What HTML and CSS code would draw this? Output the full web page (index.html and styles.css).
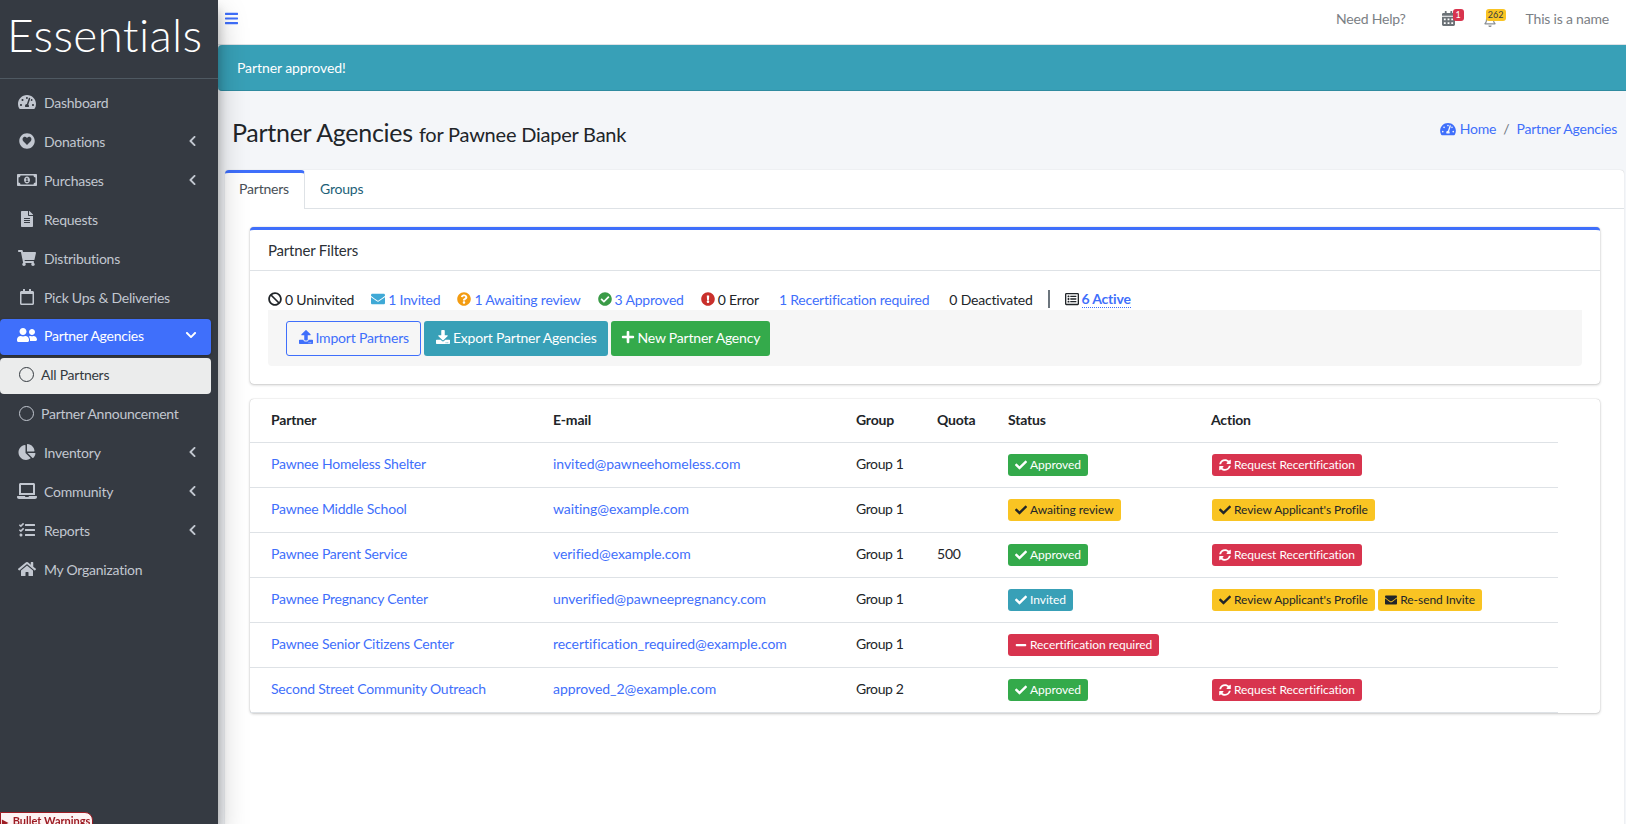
FILE: index.html
```html
<!DOCTYPE html>
<html lang="en">

<head>
    <meta charset="UTF-8" />
    <meta name="viewport" content="width=device-width, initial-scale=1.0" />
    <title>Partner Agencies</title>
    <link rel="stylesheet" href="styles.css">
</head>

<body>
    <!-- icon sprite -->
    <svg class="sprite" xmlns="http://www.w3.org/2000/svg">
        <symbol id="i-gauge" viewBox="0 0 576 512"><path d="M288 32C128.94 32 0 160.94 0 320c0 52.8 14.25 102.26 39.06 144.8 5.61 9.62 16.3 15.2 27.44 15.2h443c11.14 0 21.83-5.58 27.44-15.2C561.75 422.26 576 372.8 576 320c0-159.06-128.94-288-288-288zm0 64c14.71 0 26.58 10.13 30.32 23.65-1.11 2.26-2.64 4.23-3.45 6.67l-9.22 27.67c-5.13 3.49-10.97 6.01-17.64 6.01-17.67 0-32-14.33-32-32S270.33 96 288 96zM96 384c-17.67 0-32-14.33-32-32s14.33-32 32-32 32 14.33 32 32-14.33 32-32 32zm48-160c-17.67 0-32-14.33-32-32s14.33-32 32-32 32 14.33 32 32-14.33 32-32 32zm246.77-72.41l-61.33 184C343.13 347.33 352 364.54 352 384c0 11.72-3.38 22.55-8.88 32H232.88c-5.5-9.45-8.88-20.28-8.88-32 0-33.94 26.5-61.43 59.9-63.59l61.34-184.01c4.17-12.56 17.73-19.45 30.36-15.17 12.57 4.19 19.35 17.79 15.17 30.36zm14.66 57.2l15.52-46.55c3.47-1.29 7.13-2.23 11.05-2.23 17.67 0 32 14.33 32 32s-14.33 32-32 32c-11.38-.01-20.89-6.28-26.57-15.22zM480 384c-17.67 0-32-14.33-32-32s14.33-32 32-32 32 14.33 32 32-14.33 32-32 32z"/></symbol>
        <symbol id="i-heart" viewBox="0 0 512 512"><path fill-rule="evenodd" d="M256 8C119 8 8 119 8 256s111 248 248 248 248-111 248-248S393 8 256 8zm0 376L138 262c-34-35-32-93 6-123 33-26 79-18 104 9l8 9 8-9c25-27 71-35 104-9 38 30 40 88 6 123L256 384z"/></symbol>
        <symbol id="i-money" viewBox="0 0 640 512"><path d="M320 144c-53.02 0-96 50.14-96 112 0 61.85 42.98 112 96 112 53 0 96-50.13 96-112 0-61.86-42.98-112-96-112zm40 168c0 4.42-3.58 8-8 8h-64c-4.42 0-8-3.58-8-8v-16c0-4.42 3.58-8 8-8h16v-55.44l-.47.31a7.992 7.992 0 0 1-11.09-2.22l-8.88-13.31a7.992 7.992 0 0 1 2.22-11.09l15.33-10.22a23.99 23.99 0 0 1 13.31-4.03H328c4.42 0 8 3.58 8 8v88h16c4.42 0 8 3.58 8 8v16zM608 64H32C14.33 64 0 78.33 0 96v320c0 17.67 14.33 32 32 32h576c17.67 0 32-14.33 32-32V96c0-17.67-14.33-32-32-32zm-16 272c-35.35 0-64 28.65-64 64H112c0-35.35-28.65-64-64-64V176c35.35 0 64-28.65 64-64h416c0 35.35 28.65 64 64 64v160z"/></symbol>
        <symbol id="i-file" viewBox="0 0 384 512"><path d="M224 136V0H24C10.7 0 0 10.7 0 24v464c0 13.3 10.7 24 24 24h336c13.3 0 24-10.7 24-24V160H248c-13.2 0-24-10.8-24-24zm64 236c0 6.6-5.4 12-12 12H108c-6.6 0-12-5.4-12-12v-8c0-6.6 5.4-12 12-12h168c6.6 0 12 5.4 12 12v8zm0-64c0 6.6-5.4 12-12 12H108c-6.6 0-12-5.4-12-12v-8c0-6.6 5.4-12 12-12h168c6.6 0 12 5.4 12 12v8zm0-72v8c0 6.6-5.4 12-12 12H108c-6.6 0-12-5.4-12-12v-8c0-6.6 5.4-12 12-12h168c6.6 0 12 5.4 12 12zm96-114.1v6.1H256V0h6.1c6.4 0 12.5 2.5 17 7l97.9 98c4.5 4.5 7 10.6 7 16.9z"/></symbol>
        <symbol id="i-cart" viewBox="0 0 576 512"><path d="M528.12 301.319l47.273-208C578.806 78.301 567.391 64 551.99 64H159.208l-9.166-44.81C147.758 8.021 137.93 0 126.529 0H24C10.745 0 0 10.745 0 24v16c0 13.255 10.745 24 24 24h69.883l70.248 343.435C147.325 417.1 136 435.222 136 456c0 30.928 25.072 56 56 56s56-25.072 56-56c0-15.674-6.447-29.835-16.824-40h209.647C430.447 426.165 424 440.326 424 456c0 30.928 25.072 56 56 56s56-25.072 56-56c0-22.172-12.888-41.332-31.579-50.405l5.517-24.276c3.413-15.018-8.002-29.319-23.403-29.319H218.117l-6.545-32h293.145c11.206 0 20.92-7.754 23.403-18.681z"/></symbol>
        <symbol id="i-calendar" viewBox="0 0 448 512"><path d="M400 64h-48V12c0-6.6-5.4-12-12-12h-40c-6.6 0-12 5.4-12 12v52H160V12c0-6.6-5.4-12-12-12h-40c-6.6 0-12 5.4-12 12v52H48C21.5 64 0 85.5 0 112v352c0 26.5 21.5 48 48 48h352c26.5 0 48-21.5 48-48V112c0-26.5-21.5-48-48-48zm-6 400H54c-3.3 0-6-2.7-6-6V160h352v298c0 3.3-2.7 6-6 6z"/></symbol>
        <symbol id="i-users" viewBox="0 0 640 512"><path d="M192 256c61.9 0 112-50.1 112-112S253.9 32 192 32 80 82.1 80 144s50.1 112 112 112zm76.8 32h-8.3c-20.8 10-43.9 16-68.5 16s-47.6-6-68.5-16h-8.3C51.6 288 0 339.6 0 403.2V432c0 26.5 21.5 48 48 48h288c26.5 0 48-21.5 48-48v-28.8c0-63.6-51.6-115.2-115.2-115.2zM480 256c53 0 96-43 96-96s-43-96-96-96-96 43-96 96 43 96 96 96zm48 32h-3.8c-13.9 4.8-28.6 8-44.2 8s-30.3-3.2-44.2-8H432c-20.4 0-39.2 5.9-55.7 15.4 24.4 26.3 39.7 61.2 39.7 99.8v38.4c0 2.2-.5 4.3-.6 6.4H592c26.5 0 48-21.5 48-48 0-61.9-50.1-112-112-112z"/></symbol>
        <symbol id="i-pie" viewBox="0 0 544 512"><path d="M527.79 288H290.5l158.03 158.03c6.04 6.04 15.98 6.53 22.19.68 38.7-36.46 65.32-85.61 73.13-140.86 1.34-9.46-6.51-17.85-16.06-17.85zm-15.83-64.8C503.72 103.74 408.26 8.28 288.8.04 279.68-.59 272 7.1 272 16.24V240h223.77c9.14 0 16.82-7.68 16.19-16.8zM224 288V50.71c0-9.55-8.39-17.4-17.84-16.06C86.99 51.49-4.1 155.6.14 280.37 4.5 408.51 114.83 513.59 243.03 511.98c50.4-.63 96.97-16.87 135.26-44.03 7.9-5.6 8.42-17.23 1.57-24.08L224 288z"/></symbol>
        <symbol id="i-laptop" viewBox="0 0 640 512"><path d="M624 416H381.54c-.74 19.81-14.71 32-32.74 32H288c-18.69 0-33.02-17.47-32.77-32H16c-8.8 0-16 7.2-16 16v16c0 35.2 28.8 64 64 64h512c35.2 0 64-28.8 64-64v-16c0-8.8-7.2-16-16-16zM576 48c0-26.4-21.6-48-48-48H112C85.6 0 64 21.6 64 48v336h512V48zm-64 272H128V64h384v256z"/></symbol>
        <symbol id="i-tasks" viewBox="0 0 512 512"><path d="M139.61 35.5a12 12 0 0 0-17 0L58.93 98.81l-22.7-22.12a12 12 0 0 0-17 0L3.53 92.41a12 12 0 0 0 0 17l47.59 47.4a12.78 12.78 0 0 0 17.61 0l15.59-15.62L156.52 69a12.09 12.09 0 0 0 .09-17zm0 159.19a12 12 0 0 0-17 0l-63.68 63.72-22.7-22.1a12 12 0 0 0-17 0L3.53 252a12 12 0 0 0 0 17L51 316.5a12.77 12.77 0 0 0 17.6 0l15.7-15.69 72.2-72.22a12 12 0 0 0 .09-16.9zM64 368c-26.49 0-48.59 21.5-48.59 48S37.53 464 64 464a48 48 0 0 0 0-96zm432 16H208a16 16 0 0 0-16 16v32a16 16 0 0 0 16 16h288a16 16 0 0 0 16-16v-32a16 16 0 0 0-16-16zm0-320H208a16 16 0 0 0-16 16v32a16 16 0 0 0 16 16h288a16 16 0 0 0 16-16V80a16 16 0 0 0-16-16zm0 160H208a16 16 0 0 0-16 16v32a16 16 0 0 0 16 16h288a16 16 0 0 0 16-16v-32a16 16 0 0 0-16-16z"/></symbol>
        <symbol id="i-home" viewBox="0 0 576 512"><path d="M280.37 148.26L96 300.11V464a16 16 0 0 0 16 16l112.06-.29a16 16 0 0 0 15.92-16V368a16 16 0 0 1 16-16h64a16 16 0 0 1 16 16v95.64a16 16 0 0 0 16 16.05L464 480a16 16 0 0 0 16-16V300L295.67 148.26a12.19 12.19 0 0 0-15.3 0zM571.6 251.47L488 182.56V44.05a12 12 0 0 0-12-12h-56a12 12 0 0 0-12 12v72.61L318.47 43a48 48 0 0 0-61 0L4.34 251.47a12 12 0 0 0-1.6 16.9l25.5 31A12 12 0 0 0 45.15 301l235.22-193.74a12.19 12.19 0 0 1 15.3 0L530.9 301a12 12 0 0 0 16.9-1.6l25.5-31a12 12 0 0 0-1.7-16.93z"/></symbol>
        <symbol id="i-left" viewBox="0 0 320 512"><path d="M34.52 239.03L228.87 44.69c9.37-9.37 24.57-9.37 33.94 0l22.67 22.67c9.36 9.36 9.37 24.52.04 33.9L131.49 256l154.02 154.75c9.34 9.38 9.32 24.54-.04 33.9l-22.67 22.67c-9.37 9.37-24.57 9.37-33.94 0L34.52 272.97c-9.37-9.37-9.37-24.57 0-33.94z"/></symbol>
        <symbol id="i-down" viewBox="0 0 448 512"><path d="M207.029 381.476L12.686 187.132c-9.373-9.373-9.373-24.569 0-33.941l22.667-22.667c9.357-9.357 24.522-9.375 33.901-.04L224 284.505l154.745-154.021c9.379-9.335 24.544-9.317 33.901.04l22.667 22.667c9.373 9.373 9.373 24.569 0 33.941L240.971 381.476c-9.373 9.372-24.569 9.372-33.942 0z"/></symbol>
        <symbol id="i-bars" viewBox="0 0 448 512"><path d="M16 132h416c8.837 0 16-7.163 16-16V76c0-8.837-7.163-16-16-16H16C7.163 60 0 67.163 0 76v40c0 8.837 7.163 16 16 16zm0 160h416c8.837 0 16-7.163 16-16v-40c0-8.837-7.163-16-16-16H16c-8.837 0-16 7.163-16 16v40c0 8.837 7.163 16 16 16zm0 160h416c8.837 0 16-7.163 16-16v-40c0-8.837-7.163-16-16-16H16c-8.837 0-16 7.163-16 16v40c0 8.837 7.163 16 16 16z"/></symbol>
        <symbol id="i-cal-solid" viewBox="0 0 448 512"><path d="M0 464c0 26.5 21.5 48 48 48h352c26.5 0 48-21.5 48-48V192H0v272zm320-196c0-6.6 5.4-12 12-12h40c6.6 0 12 5.4 12 12v40c0 6.6-5.4 12-12 12h-40c-6.6 0-12-5.4-12-12v-40zm0 128c0-6.6 5.4-12 12-12h40c6.6 0 12 5.4 12 12v40c0 6.6-5.4 12-12 12h-40c-6.6 0-12-5.4-12-12v-40zM192 268c0-6.6 5.4-12 12-12h40c6.6 0 12 5.4 12 12v40c0 6.6-5.4 12-12 12h-40c-6.6 0-12-5.4-12-12v-40zm0 128c0-6.6 5.4-12 12-12h40c6.6 0 12 5.4 12 12v40c0 6.6-5.4 12-12 12h-40c-6.6 0-12-5.4-12-12v-40zM64 268c0-6.6 5.4-12 12-12h40c6.6 0 12 5.4 12 12v40c0 6.6-5.4 12-12 12H76c-6.6 0-12-5.4-12-12v-40zm0 128c0-6.6 5.4-12 12-12h40c6.6 0 12 5.4 12 12v40c0 6.6-5.4 12-12 12H76c-6.6 0-12-5.4-12-12v-40zM400 64h-48V16c0-8.8-7.2-16-16-16h-32c-8.8 0-16 7.2-16 16v48H160V16c0-8.8-7.2-16-16-16h-32c-8.8 0-16 7.2-16 16v48H48C21.5 64 0 85.5 0 112v48h448v-48c0-26.5-21.5-48-48-48z"/></symbol>
        <symbol id="i-bell" viewBox="0 0 448 512"><path d="M439.39 362.29c-19.32-20.76-55.47-51.99-55.47-154.29 0-77.7-54.48-139.9-127.94-155.16V32c0-17.67-14.32-32-31.98-32s-31.98 14.33-31.98 32v20.84C118.56 68.1 64.08 130.3 64.08 208c0 102.3-36.15 133.53-55.47 154.29-6 6.45-8.66 14.16-8.61 21.71.11 16.4 12.98 32 32.1 32h383.8c19.12 0 32-15.6 32.1-32 .05-7.55-2.61-15.27-8.61-21.71zM67.53 368c21.22-27.97 44.42-74.33 44.53-159.42 0-.2-.06-.38-.06-.58 0-61.86 50.14-112 112-112s112 50.14 112 112c0 .2-.06.38-.06.58.11 85.1 23.31 131.46 44.53 159.42H67.53zM224 512c35.32 0 63.97-28.65 63.97-64H160.03c0 35.35 28.65 64 63.97 64z"/></symbol>
        <symbol id="i-ban" viewBox="0 0 512 512"><path d="M256 8C119.034 8 8 119.033 8 256s111.034 248 248 248 248-111.034 248-248S392.967 8 256 8zm130.108 117.892c65.448 65.448 70 165.481 20.677 235.637L150.47 105.216c70.204-49.356 170.226-44.735 235.638 20.676zM125.892 386.108c-65.448-65.448-70-165.481-20.677-235.637L361.53 406.784c-70.203 49.356-170.226 44.736-235.638-20.676z"/></symbol>
        <symbol id="i-mail" viewBox="0 0 512 512"><path d="M502.3 190.8c3.9-3.1 9.7-.2 9.7 4.7V400c0 26.5-21.5 48-48 48H48c-26.5 0-48-21.5-48-48V195.6c0-5 5.7-7.8 9.7-4.7 22.4 17.4 52.1 39.5 154.1 113.6 21.1 15.4 56.7 47.8 92.2 47.6 35.7.3 72-32.8 92.3-47.6 102-74.1 131.6-96.3 154-113.7zM256 320c23.2.4 56.6-29.2 73.4-41.4 132.7-96.3 142.8-104.7 173.4-128.7 5.8-4.5 9.2-11.5 9.2-18.9v-19c0-26.5-21.5-48-48-48H48C21.5 64 0 85.5 0 112v19c0 7.4 3.4 14.3 9.2 18.9 30.6 23.9 40.7 32.4 173.4 128.7 16.8 12.2 50.2 41.8 73.4 41.4z"/></symbol>
        <symbol id="i-question" viewBox="0 0 512 512"><path d="M504 256c0 136.997-111.043 248-248 248S8 392.997 8 256C8 119.083 119.043 8 256 8s248 111.083 248 248zM262.655 90c-54.497 0-89.255 22.957-116.549 63.758-3.536 5.286-2.353 12.415 2.715 16.258l34.699 26.31c5.205 3.947 12.621 3.008 16.665-2.122 17.864-22.658 30.113-35.797 57.303-35.797 20.429 0 45.698 13.148 45.698 32.958 0 14.976-12.363 22.667-32.534 33.976C247.128 238.528 216 254.941 216 296v4c0 6.627 5.373 12 12 12h56c6.627 0 12-5.373 12-12v-1.333c0-28.462 83.186-29.647 83.186-106.667 0-58.002-60.165-102-116.531-102zM256 338c-25.365 0-46 20.635-46 46 0 25.364 20.635 46 46 46s46-20.636 46-46c0-25.365-20.635-46-46-46z"/></symbol>
        <symbol id="i-check-circle" viewBox="0 0 512 512"><path d="M504 256c0 136.967-111.033 248-248 248S8 392.967 8 256 119.033 8 256 8s248 111.033 248 248zM227.314 387.314l184-184c6.248-6.248 6.248-16.379 0-22.627l-22.627-22.627c-6.248-6.249-16.379-6.249-22.628 0L216 308.118l-70.059-70.059c-6.248-6.248-16.379-6.248-22.628 0l-22.627 22.627c-6.248 6.248-6.248 16.379 0 22.627l104 104c6.249 6.249 16.379 6.249 22.628.001z"/></symbol>
        <symbol id="i-alert" viewBox="0 0 512 512"><path d="M504 256c0 136.997-111.043 248-248 248S8 392.997 8 256C8 119.083 119.043 8 256 8s248 111.083 248 248zm-248 50c-25.405 0-46 20.595-46 46s20.595 46 46 46 46-20.595 46-46-20.595-46-46-46zm-43.673-165.346l7.418 136c.347 6.364 5.609 11.346 11.982 11.346h48.546c6.373 0 11.635-4.982 11.982-11.346l7.418-136c.375-6.874-5.098-12.654-11.982-12.654h-63.383c-6.884 0-12.356 5.78-11.981 12.654z"/></symbol>
        <symbol id="i-list" viewBox="0 0 512 512"><path d="M464 32H48C21.49 32 0 53.49 0 80v352c0 26.51 21.49 48 48 48h416c26.51 0 48-21.49 48-48V80c0-26.51-21.49-48-48-48zm-6 400H54a6 6 0 0 1-6-6V86a6 6 0 0 1 6-6h404a6 6 0 0 1 6 6v340a6 6 0 0 1-6 6zm-42-92v24c0 6.627-5.373 12-12 12H204c-6.627 0-12-5.373-12-12v-24c0-6.627 5.373-12 12-12h200c6.627 0 12 5.373 12 12zm0-96v24c0 6.627-5.373 12-12 12H204c-6.627 0-12-5.373-12-12v-24c0-6.627 5.373-12 12-12h200c6.627 0 12 5.373 12 12zm0-96v24c0 6.627-5.373 12-12 12H204c-6.627 0-12-5.373-12-12v-24c0-6.627 5.373-12 12-12h200c6.627 0 12 5.373 12 12zm-252 12c0 19.882-16.118 36-36 36s-36-16.118-36-36 16.118-36 36-36 36 16.118 36 36zm0 96c0 19.882-16.118 36-36 36s-36-16.118-36-36 16.118-36 36-36 36 16.118 36 36zm0 96c0 19.882-16.118 36-36 36s-36-16.118-36-36 16.118-36 36-36 36 16.118 36 36z"/></symbol>
        <symbol id="i-upload" viewBox="0 0 512 512"><path d="M296 384h-80c-13.3 0-24-10.7-24-24V192h-87.7c-17.8 0-26.7-21.5-14.1-34.1L242.3 5.7c7.5-7.5 19.8-7.5 27.3 0l152.2 152.2c12.6 12.6 3.7 34.1-14.1 34.1H320v168c0 13.3-10.7 24-24 24zm216-8v112c0 13.3-10.7 24-24 24H24c-13.3 0-24-10.7-24-24V376c0-13.3 10.7-24 24-24h136v8c0 30.9 25.1 56 56 56h80c30.9 0 56-25.1 56-56v-8h136c13.3 0 24 10.7 24 24zm-124 88c0-11-9-20-20-20s-20 9-20 20 9 20 20 20 20-9 20-20zm64 0c0-11-9-20-20-20s-20 9-20 20 9 20 20 20 20-9 20-20z"/></symbol>
        <symbol id="i-download" viewBox="0 0 512 512"><path d="M216 0h80c13.3 0 24 10.7 24 24v168h87.7c17.8 0 26.7 21.5 14.1 34.1L269.7 378.3c-7.5 7.5-19.8 7.5-27.3 0L90.1 226.1c-12.6-12.6-3.7-34.1 14.1-34.1H192V24c0-13.3 10.7-24 24-24zm296 376v112c0 13.3-10.7 24-24 24H24c-13.3 0-24-10.7-24-24V376c0-13.3 10.7-24 24-24h146.7l49 49c20.1 20.1 52.5 20.1 72.6 0l49-49H488c13.3 0 24 10.7 24 24zm-124 88c0-11-9-20-20-20s-20 9-20 20 9 20 20 20 20-9 20-20zm64 0c0-11-9-20-20-20s-20 9-20 20 9 20 20 20 20-9 20-20z"/></symbol>
        <symbol id="i-plus" viewBox="0 0 448 512"><path d="M416 208H272V64c0-17.67-14.33-32-32-32h-32c-17.67 0-32 14.33-32 32v144H32c-17.67 0-32 14.33-32 32v32c0 17.67 14.33 32 32 32h144v144c0 17.67 14.33 32 32 32h32c17.67 0 32-14.33 32-32V304h144c17.67 0 32-14.33 32-32v-32c0-17.67-14.33-32-32-32z"/></symbol>
        <symbol id="i-minus" viewBox="0 0 448 512"><path d="M416 208H32c-17.67 0-32 14.33-32 32v32c0 17.67 14.33 32 32 32h384c17.67 0 32-14.33 32-32v-32c0-17.67-14.33-32-32-32z"/></symbol>
        <symbol id="i-check" viewBox="0 0 512 512"><path d="M173.898 439.404l-166.4-166.4c-9.997-9.997-9.997-26.206 0-36.204l36.203-36.204c9.997-9.998 26.207-9.998 36.204 0L192 312.69 432.095 72.596c9.997-9.997 26.207-9.997 36.204 0l36.203 36.204c9.997 9.997 9.997 26.206 0 36.204l-294.4 294.401c-9.998 9.997-26.207 9.997-36.204-.001z"/></symbol>
        <symbol id="i-sync" viewBox="0 0 512 512"><path d="M370.72 133.28C339.458 104.008 298.888 87.962 255.848 88c-77.458.068-144.328 53.178-162.791 126.85-1.344 5.363-6.122 9.15-11.651 9.15H24.103c-7.498 0-13.194-6.807-11.807-14.176C33.933 94.924 134.813 8 256 8c66.448 0 126.791 26.136 171.315 68.685L463.03 40.97C478.149 25.851 504 36.559 504 57.941V192c0 13.255-10.745 24-24 24H345.941c-21.382 0-32.09-25.851-16.971-40.971l41.75-41.749zM32 296h134.059c21.382 0 32.09 25.851 16.971 40.971l-41.75 41.75c31.262 29.273 71.835 45.319 114.876 45.28 77.418-.07 144.315-53.144 162.787-126.849 1.344-5.363 6.122-9.15 11.651-9.15h57.304c7.498 0 13.194 6.807 11.807 14.176C478.067 417.076 377.187 504 256 504c-66.448 0-126.791-26.136-171.315-68.685L48.97 471.03C33.851 486.149 8 475.441 8 454.059V320c0-13.255 10.745-24 24-24z"/></symbol>
    </svg>

    <aside class="sidebar">
        <div class="brand">Essentials</div>
        <ul class="menu">
            <li><a href="#"><svg class="nav-icon"><use href="#i-gauge"/></svg>Dashboard</a></li>
            <li><a href="#"><svg class="nav-icon"><use href="#i-heart"/></svg>Donations<svg class="caret"><use href="#i-left"/></svg></a></li>
            <li><a href="#"><svg class="nav-icon"><use href="#i-money"/></svg>Purchases<svg class="caret"><use href="#i-left"/></svg></a></li>
            <li><a href="#"><svg class="nav-icon"><use href="#i-file"/></svg>Requests</a></li>
            <li><a href="#"><svg class="nav-icon"><use href="#i-cart"/></svg>Distributions</a></li>
            <li><a href="#"><svg class="nav-icon"><use href="#i-calendar"/></svg>Pick Ups &amp; Deliveries</a></li>
            <li><a href="#" class="active"><svg class="nav-icon"><use href="#i-users"/></svg>Partner Agencies<svg class="caret"><use href="#i-down"/></svg></a></li>
            <li><a href="#" class="sub current"><span class="ring"></span>All Partners</a></li>
            <li><a href="#" class="sub"><span class="ring"></span>Partner Announcement</a></li>
            <li><a href="#"><svg class="nav-icon"><use href="#i-pie"/></svg>Inventory<svg class="caret"><use href="#i-left"/></svg></a></li>
            <li><a href="#"><svg class="nav-icon"><use href="#i-laptop"/></svg>Community<svg class="caret"><use href="#i-left"/></svg></a></li>
            <li><a href="#"><svg class="nav-icon"><use href="#i-tasks"/></svg>Reports<svg class="caret"><use href="#i-left"/></svg></a></li>
            <li><a href="#"><svg class="nav-icon"><use href="#i-home"/></svg>My Organization</a></li>
        </ul>
    </aside>

    <div class="main">
        <nav class="topbar">
            <a href="#" class="toggle"><svg class="icon-toggle"><use href="#i-bars"/></svg></a>
            <div class="top-right">
                <a href="#" class="top-link help">Need Help?</a>
                <a href="#" class="top-icon cal"><svg><use href="#i-cal-solid"/></svg><span class="count red">1</span></a>
                <a href="#" class="top-icon bell"><svg><use href="#i-bell"/></svg><span class="count yellow">262</span></a>
                <a href="#" class="top-link">This is a name</a>
            </div>
        </nav>

        <div class="alert">Partner approved!</div>

        <header class="page-head">
            <h1>Partner Agencies <small>for Pawnee Diaper Bank</small></h1>
            <ol class="crumbs">
                <li><a href="#"><svg><use href="#i-gauge"/></svg>Home</a></li>
                <li class="sep">/</li>
                <li><a href="#">Partner Agencies</a></li>
            </ol>
        </header>

        <section class="tab-card">
            <div class="tabs">
                <a href="#" class="tab on">Partners</a>
                <a href="#" class="tab">Groups</a>
            </div>
            <div class="tab-body">
                <div class="card filters">
                    <div class="card-head">Partner Filters</div>
                    <div class="card-body">
                        <div class="filter-row">
                            <span class="f"><svg class="dark"><use href="#i-ban"/></svg>0 Uninvited</span>
                            <a href="#" class="f"><svg class="c-info"><use href="#i-mail"/></svg>1 Invited</a>
                            <a href="#" class="f"><svg class="c-orange"><use href="#i-question"/></svg>1 Awaiting review</a>
                            <a href="#" class="f"><svg class="c-green"><use href="#i-check-circle"/></svg>3 Approved</a>
                            <span class="f"><svg class="c-red"><use href="#i-alert"/></svg>0 Error</span>
                            <a href="#" class="f wide">1 Recertification required</a>
                            <span class="f wide">0 Deactivated</span>
                            <span class="divider"></span>
                            <span class="f"><svg class="dark"><use href="#i-list"/></svg><a href="#" class="all">6 Active</a></span>
                        </div>
                        <div class="btn-strip">
                            <a href="#" class="btn outline"><svg><use href="#i-upload"/></svg>Import Partners</a>
                            <a href="#" class="btn teal"><svg><use href="#i-download"/></svg>Export Partner Agencies</a>
                            <a href="#" class="btn green"><svg><use href="#i-plus"/></svg>New Partner Agency</a>
                        </div>
                    </div>
                </div>

                <div class="card list">
                    <table>
                        <colgroup>
                            <col class="c1"><col class="c2"><col class="c3"><col class="c4"><col class="c5"><col class="c6">
                        </colgroup>
                        <thead>
                            <tr><th>Partner</th><th>E-mail</th><th>Group</th><th>Quota</th><th>Status</th><th>Action</th></tr>
                        </thead>
                        <tbody>
                            <tr>
                                <td><a href="#">Pawnee Homeless Shelter</a></td>
                                <td class="mail"><a href="#">invited@pawneehomeless.com</a></td>
                                <td class="grp">Group 1</td><td></td>
                                <td><span class="tag green"><svg><use href="#i-check"/></svg>Approved</span></td>
                                <td class="actions"><a href="#" class="tag red"><svg><use href="#i-sync"/></svg>Request Recertification</a></td>
                            </tr>
                            <tr>
                                <td><a href="#">Pawnee Middle School</a></td>
                                <td class="mail"><a href="#">waiting@example.com</a></td>
                                <td class="grp">Group 1</td><td></td>
                                <td><span class="tag yellow"><svg><use href="#i-check"/></svg>Awaiting review</span></td>
                                <td class="actions"><a href="#" class="tag yellow"><svg><use href="#i-check"/></svg>Review Applicant's Profile</a></td>
                            </tr>
                            <tr>
                                <td><a href="#">Pawnee Parent Service</a></td>
                                <td class="mail"><a href="#">verified@example.com</a></td>
                                <td class="grp">Group 1</td><td>500</td>
                                <td><span class="tag green"><svg><use href="#i-check"/></svg>Approved</span></td>
                                <td class="actions"><a href="#" class="tag red"><svg><use href="#i-sync"/></svg>Request Recertification</a></td>
                            </tr>
                            <tr>
                                <td><a href="#">Pawnee Pregnancy Center</a></td>
                                <td class="mail"><a href="#">unverified@pawneepregnancy.com</a></td>
                                <td class="grp">Group 1</td><td></td>
                                <td><span class="tag teal"><svg><use href="#i-check"/></svg>Invited</span></td>
                                <td class="actions">
                                    <a href="#" class="tag yellow"><svg><use href="#i-check"/></svg>Review Applicant's Profile</a>
                                    <a href="#" class="tag yellow"><svg><use href="#i-mail"/></svg>Re-send Invite</a>
                                </td>
                            </tr>
                            <tr>
                                <td><a href="#">Pawnee Senior Citizens Center</a></td>
                                <td class="mail"><a href="#">recertification_required@example.com</a></td>
                                <td class="grp">Group 1</td><td></td>
                                <td><span class="tag red"><svg><use href="#i-minus"/></svg>Recertification required</span></td>
                                <td></td>
                            </tr>
                            <tr>
                                <td><a href="#">Second Street Community Outreach</a></td>
                                <td class="mail"><a href="#">approved_2@example.com</a></td>
                                <td class="grp">Group 2</td><td></td>
                                <td><span class="tag green"><svg><use href="#i-check"/></svg>Approved</span></td>
                                <td class="actions"><a href="#" class="tag red"><svg><use href="#i-sync"/></svg>Request Recertification</a></td>
                            </tr>
                        </tbody>
                    </table>
                </div>
            </div>
        </section>
    </div>

    <div class="bullet"><span class="tri">&#9654;</span> Bullet Warnings</div>
</body>

</html>
```

FILE: styles.css
```css
* {
    box-sizing: border-box;
}

:root {
    --blue: #3f6ffb;
    --teal: #38a0b7;
    --green: #34aa4b;
    --red: #d8344e;
    --yellow: #f9c423;
    --dark: #343a40;
    --line: #dee2e6;
}

body {
    margin: 0;
    height: 100vh;
    display: flex;
    overflow: hidden;
    font-family: "Lato", "Liberation Sans", sans-serif;
    font-size: 14px;
    letter-spacing: -.2px;
    color: #212529;
    background-color: #f4f6f9;
}

a {
    color: var(--blue);
    text-decoration: none;
}

ul,
ol {
    list-style: none;
    margin: 0;
    padding: 0;
}

.sprite {
    display: none;
}

/* sidebar */
.sidebar {
    width: 218px;
    flex: none;
    background-color: #353a42;
    color: #c2c7d0;
    position: relative;
    z-index: 2;
    box-shadow: 0 14px 28px rgba(0, 0, 0, .25), 0 10px 10px rgba(0, 0, 0, .22);
}

.brand {
    height: 79px;
    padding: 5px 0 0 7px;
    border-bottom: 1px solid #4f5962;
    color: #fff;
    font-weight: 300;
    font-size: 46px;
    line-height: 60px;
    letter-spacing: .3px;
}

.menu {
    padding-top: 6px;
}

.menu a {
    height: 36px;
    width: 211px;
    margin-bottom: 3px;
    display: flex;
    align-items: center;
    color: #c2c7d0;
    border-radius: 4px;
    padding: 0 0 2px 17px;
    letter-spacing: -.25px;
}

.menu li:nth-child(n+7) a {
    padding-bottom: 4px;
}

.nav-icon {
    width: 20px;
    height: 16px;
    margin-right: 7px;
    fill: currentColor;
    flex: none;
}

.caret {
    width: 9px;
    height: 12px;
    fill: currentColor;
    margin-left: auto;
    margin-right: 14px;
    flex: none;
}

.menu a.active {
    background-color: var(--blue);
    color: #fff;
    box-shadow: 0 1px 3px rgba(0, 0, 0, .3);
}

.menu a.active .caret {
    width: 12px;
    margin-right: 14px;
}

.menu a.current {
    background-color: #ebecec;
    color: var(--dark);
}

.ring {
    width: 15px;
    height: 15px;
    border: 1.6px solid currentColor;
    border-radius: 50%;
    margin: 0 7px 0 1px;
    flex: none;
}

.menu a.sub {
    padding-left: 18px;
}

/* top */
.main {
    flex: 1;
    min-width: 0;
    display: flex;
    flex-direction: column;
}

.topbar {
    height: 45px;
    flex: none;
    background-color: #fff;
    border-bottom: 1px solid var(--line);
    display: flex;
    align-items: center;
    justify-content: space-between;
    padding: 0 17px 8px 7px;
}

.icon-toggle {
    display: block;
    width: 13px;
    height: 15px;
    fill: var(--blue);
}

.top-right {
    display: flex;
    align-items: center;
}

.top-link {
    color: #7b8085;
}

.help {
    margin-right: 36px;
}

.top-icon {
    position: relative;
    display: block;
    height: 15px;
    color: #6c7277;
}

.top-icon svg {
    display: block;
    width: 13px;
    height: 15px;
    fill: currentColor;
}

.bell svg {
    width: 12px;
    height: 13px;
    margin-top: 3px;
    color: #8a8f94;
}

.cal {
    margin-right: 29px;
}

.bell {
    width: 13px;
    margin-right: 29px;
}

.count {
    position: absolute;
    top: -2px;
    font-size: 9px;
    line-height: 12px;
    height: 12px;
    border-radius: 3px;
    text-align: center;
    letter-spacing: 0;
}

.count.red {
    left: 11px;
    width: 11px;
    background-color: var(--red);
    color: #fff;
}

.count.yellow {
    left: 2px;
    width: 20px;
    background-color: var(--yellow);
    color: #343a40;
}

.alert {
    height: 46px;
    flex: none;
    display: flex;
    align-items: center;
    padding-left: 19px;
    background-color: var(--teal);
    border-bottom: 1px solid #2f8ba0;
    border-radius: 4px 0 0 4px;
    color: #fff;
    letter-spacing: -.08px;
}

.page-head {
    height: 79px;
    flex: none;
    display: flex;
    justify-content: space-between;
    align-items: center;
    padding: 2px 9px 0 14px;
}

h1 {
    margin: 0;
    font-weight: 400;
    font-size: 25px;
    letter-spacing: -.28px;
}

h1 small {
    font-size: 20px;
    letter-spacing: -.22px;
}

.crumbs {
    display: flex;
    align-items: center;
    margin-bottom: 6px;
}

.crumbs svg {
    width: 16px;
    height: 14px;
    fill: currentColor;
    margin-right: 4px;
    vertical-align: -2px;
}

.sep {
    color: #6c757d;
    margin: 0 7px;
}

/* tab card */
.tab-card {
    flex: 1;
    margin: 0 2px 0 7px;
    background-color: #fff;
    border-radius: 4px 4px 0 0;
    box-shadow: 0 0 1px rgba(0, 0, 0, .25);
}

.tabs {
    height: 39px;
    display: flex;
    border-bottom: 1px solid var(--line);
}

.tab {
    height: 39px;
    width: 80px;
    padding: 7px 0 0 15px;
    color: #1d5f78;
    border-top: 3px solid transparent;
}

.tab.on {
    padding-left: 14px;
    color: #495057;
    background-color: #fff;
    border-top-color: var(--blue);
    border-right: 1px solid var(--line);
    border-radius: 4px 4px 0 0;
}

.tab-body {
    padding: 18px 24px 0 25px;
}

.card {
    background-color: #fff;
    border-radius: 4px;
    box-shadow: 0 0 1px rgba(0, 0, 0, .3), 0 1px 3px rgba(0, 0, 0, .2);
}

.filters {
    border-top: 3px solid var(--blue);
    height: 157px;
}

.card-head {
    height: 41px;
    padding: 0 17px 1px 18px;
    display: flex;
    align-items: center;
    border-bottom: 1px solid var(--line);
    color: #2b3036;
    font-size: 15px;
}

.card-body {
    padding: 0 18px;
}

.filter-row {
    height: 39px;
    padding-top: 17px;
    display: flex;
    align-items: center;
    gap: 17px;
}

.f {
    display: flex;
    align-items: center;
    white-space: nowrap;
}

.f.wide {
    margin-left: 3px;
}

.f svg {
    width: 14px;
    height: 14px;
    margin-right: 3px;
    fill: currentColor;
    flex: none;
}

.f .dark {
    color: #212529;
}

.c-info {
    color: #3fa9d6;
}

.c-orange {
    color: #f39c12;
}

.c-green {
    color: #3a9b47;
}

.c-red {
    color: #c9302c;
}

.divider {
    width: 2px;
    height: 18px;
    margin: 0 -2px;
    background-color: #6c757d;
}

.all {
    font-weight: 700;
    border-bottom: 1px dotted var(--blue);
    line-height: 17px;
}

.btn-strip {
    height: 56px;
    padding: 11px 18px;
    display: flex;
    gap: 3px;
    background-color: #f6f6f6;
    border-radius: 0 0 4px 4px;
}

.btn {
    height: 35px;
    display: flex;
    align-items: center;
    padding: 0 11.5px 3px;
    border-radius: 3px;
    color: #fff;
    white-space: nowrap;
}

.btn svg {
    width: 14px;
    height: 14px;
    margin-right: 3px;
    fill: currentColor;
}

.btn.outline {
    color: var(--blue);
    border: 1px solid var(--blue);
}

.btn.teal {
    background-color: var(--teal);
}

.btn.green {
    padding: 0 9.5px 3px;
    background-color: var(--green);
}

/* table */
.list {
    margin-top: 15px;
    height: 314px;
}

table {
    width: 1308px;
    border-collapse: collapse;
    table-layout: fixed;
}

.c1 {
    width: 282px;
}

.c2 {
    width: 303px;
}

.c3 {
    width: 81px;
}

.c4 {
    width: 71px;
}

.c5 {
    width: 203px;
}

th,
td {
    padding: 0 0 2px 21px;
    text-align: left;
    border-bottom: 1px solid var(--line);
    white-space: nowrap;
}

th {
    height: 43px;
    font-weight: 700;
    color: #212529;
}

td {
    height: 45px;
}

.mail {
    letter-spacing: -.05px;
}

.grp {
    letter-spacing: -.4px;
}

.tag {
    display: inline-flex;
    align-items: center;
    height: 22px;
    margin-top: 2px;
    padding: 0 7px;
    border-radius: 3px;
    font-size: 12px;
    letter-spacing: -.05px;
    color: #fff;
    vertical-align: middle;
}

.actions .tag:first-child {
    margin-left: 1px;
}

.tag svg {
    width: 12px;
    height: 12px;
    margin-right: 3px;
    fill: currentColor;
}

.tag.green {
    background-color: var(--green);
}

.tag.red {
    background-color: var(--red);
}

.tag.teal {
    background-color: var(--teal);
}

.tag.yellow {
    background-color: var(--yellow);
    color: #212529;
}

/* dev toolbar stuck on the window corner */
.bullet {
    position: fixed;
    left: 0;
    bottom: -7px;
    z-index: 5;
    width: 93px;
    height: 19px;
    padding: 1px 0 0 1px;
    background-color: #fdf3f3;
    border: 1px solid #9d1c24;
    border-radius: 0 8px 0 0;
    color: #9d1c24;
    font-size: 11px;
    font-weight: 700;
    letter-spacing: 0;
    white-space: nowrap;
}

.tri {
    font-size: 8px;
    margin-right: 2px;
}
```
